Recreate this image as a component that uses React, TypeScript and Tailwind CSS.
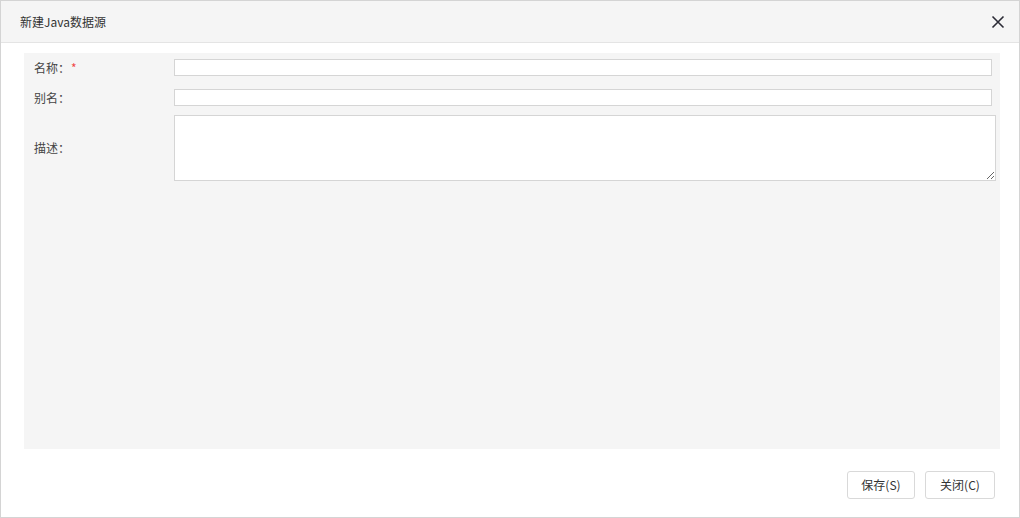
import React from "react";

export default function App() {
  const font = { fontFamily: '"Noto Sans CJK SC", "Noto Sans", "Liberation Sans", sans-serif' };
  return (
    <div className="w-[1020px] h-[518px] bg-white border border-[#d4d4d4] flex flex-col text-[12px] text-[#333]" style={font}>
      <div className="h-[42px] shrink-0 bg-[#f5f5f5] border-b border-[#e4e4e4] flex items-center justify-between pl-[19px] pr-[14px]">
        <span className="text-[12px] text-[#333] leading-none">新建Java数据源</span>
        <svg width="14" height="14" viewBox="0 0 14 14" className="text-[#2b2b36]">
          <path d="M1.5 1.5 L12.5 12.5 M12.5 1.5 L1.5 12.5" stroke="currentColor" strokeWidth="1.6" />
        </svg>
      </div>
      <div className="flex-1 flex flex-col pt-[10px] pl-[23px] pr-[19px]">
        <div className="h-[396px] bg-[#f5f5f5] pl-[10px] pr-[4px] pt-[6px] flex flex-col">
          <div className="flex items-center h-[17px]">
            <div className="w-[140px] shrink-0 text-[#444] flex items-center">
              名称：<span className="text-[#f04848] ml-[1px]">*</span>
            </div>
            <div className="flex-1 pr-[4px]">
              <input className="block w-full h-[17px] bg-white border border-[#d5d5d5] outline-none" />
            </div>
          </div>
          <div className="flex items-center h-[17px] mt-[13px]">
            <div className="w-[140px] shrink-0 text-[#444]">别名：</div>
            <div className="flex-1 pr-[4px]">
              <input className="block w-full h-[17px] bg-white border border-[#d5d5d5] outline-none" />
            </div>
          </div>
          <div className="flex items-center mt-[9px]">
            <div className="w-[140px] shrink-0 text-[#444]">描述：</div>
            <textarea className="block flex-1 h-[66px] bg-white border border-[#d5d5d5] outline-none" />
          </div>
        </div>
        <div className="flex justify-end gap-[10px] mt-[22px] pr-[5px]">
          <button className="w-[68px] h-[28px] border border-[#d9d9d9] rounded-[3px] bg-white text-[12px] text-[#333]">保存(S)</button>
          <button className="w-[70px] h-[28px] border border-[#d9d9d9] rounded-[3px] bg-white text-[12px] text-[#333]">关闭(C)</button>
        </div>
      </div>
    </div>
  );
}
